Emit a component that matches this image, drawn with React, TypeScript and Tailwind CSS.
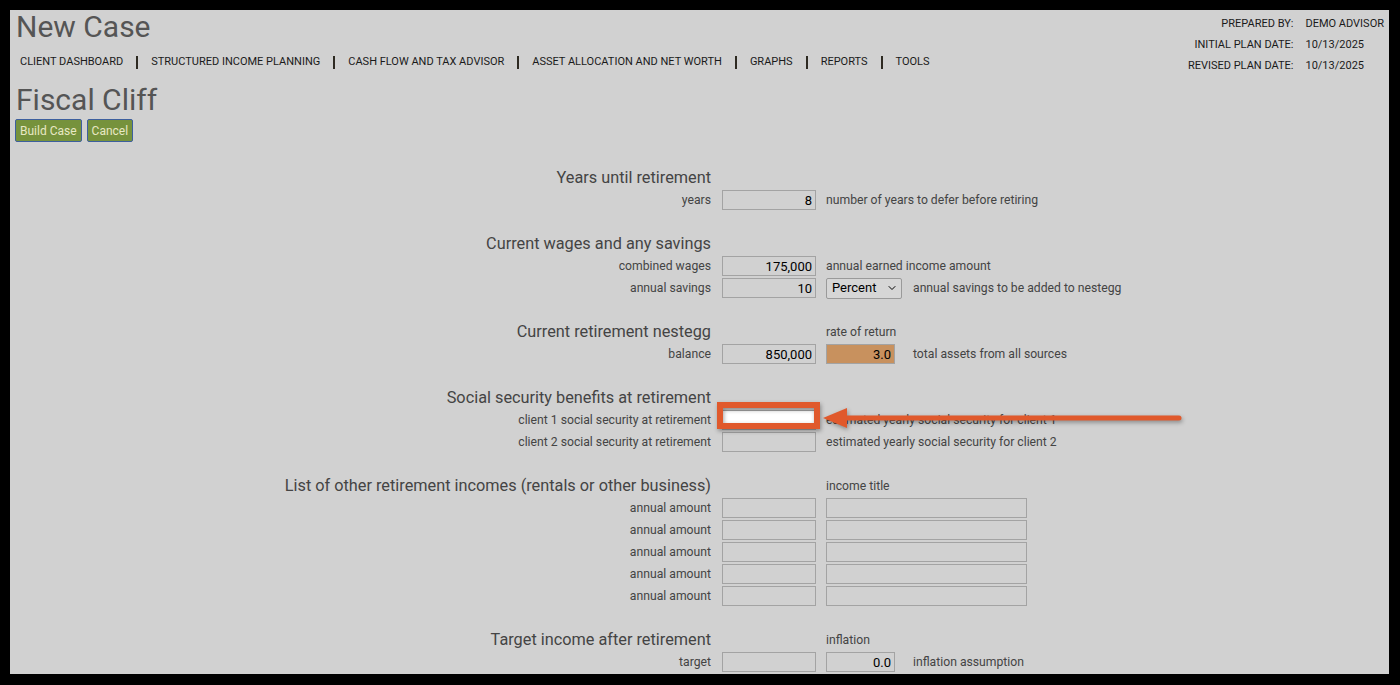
import React from "react";
import { ChevronDown } from "lucide-react";

const navItems = [
  "CLIENT DASHBOARD",
  "STRUCTURED INCOME PLANNING",
  "CASH FLOW AND TAX ADVISOR",
  "ASSET ALLOCATION AND NET WORTH",
  "GRAPHS",
  "REPORTS",
  "TOOLS",
];

function Field({
  value = "",
  w = "w-[94px]",
  bg = "bg-transparent",
}: {
  value?: string;
  w?: string;
  bg?: string;
}) {
  return (
    <input
      readOnly
      value={value}
      className={`${w} ${bg} h-[20px] border border-[#a3a3a3] text-right pr-[3px] text-[13px] text-black outline-none`}
    />
  );
}

function Row({
  label,
  heading,
  children,
}: {
  label: string;
  heading?: boolean;
  children?: React.ReactNode;
}) {
  return (
    <div className="flex items-center h-[22px]">
      <div
        className={`w-[695px] shrink-0 text-right ${
          heading ? "text-[16.3px] text-[#444]" : "text-[12.2px] text-[#444]"
        }`}
      >
        {label}
      </div>
      {children}
    </div>
  );
}

const Spacer = () => <div className="h-[22px]" />;

export default function App() {
  return (
    <div
      className="relative w-[1400px] h-[685px] bg-black pt-[10px] pl-[10px] pr-[11px] pb-[11px]"
      style={{ fontFamily: "Roboto, 'Liberation Sans', sans-serif" }}
    >
      <div className="bg-[#d1d1d1] h-full overflow-hidden pl-[6px] pr-[5px]">
        <div className="flex justify-between">
          <div>
            <h1 className="text-[30px] leading-[34px] text-[#555]">New Case</h1>
            <nav className="mt-[10px] ml-[4px] flex items-center gap-[13px] text-[11px] leading-[16px] text-[#1a1a1a]">
              {navItems.map((item, i) => (
                <React.Fragment key={item}>
                  {i > 0 && <span className="w-[2px] h-[13px] bg-[#2e2a22]" />}
                  <span>{item}</span>
                </React.Fragment>
              ))}
            </nav>
          </div>
          <div className="pt-[3px] grid grid-cols-[auto_auto] gap-x-[12px] text-[11px] leading-[21px] text-[#1a1a1a]">
            <span className="text-right">PREPARED BY:</span>
            <span>DEMO ADVISOR</span>
            <span className="text-right">INITIAL PLAN DATE:</span>
            <span>10/13/2025</span>
            <span className="text-right">REVISED PLAN DATE:</span>
            <span>10/13/2025</span>
          </div>
        </div>

        <h2 className="mt-[8px] text-[30px] leading-[32px] text-[#555]">Fiscal Cliff</h2>
        <div className="mt-[3px] -ml-px flex gap-[5px]">
          <button className="h-[23px] px-[4px] bg-[#76923c] border border-[#3d5f9e] rounded-[2px] text-[12px] text-[#e8e8c4]">
            Build Case
          </button>
          <button className="h-[23px] px-[4px] bg-[#76923c] border border-[#3d5f9e] rounded-[2px] text-[12px] text-[#e8e8c4]">
            Cancel
          </button>
        </div>

        <div className="mt-[25px] text-[12.2px] text-[#444]">
          <Row label="Years until retirement" heading />
          <Row label="years">
            <div className="ml-[11px]"><Field value="8" /></div>
            <span className="ml-[10px]">number of years to defer before retiring</span>
          </Row>
          <Spacer />
          <Row label="Current wages and any savings" heading />
          <Row label="combined wages">
            <div className="ml-[11px]"><Field value="175,000" /></div>
            <span className="ml-[10px]">annual earned income amount</span>
          </Row>
          <Row label="annual savings">
            <div className="ml-[11px]"><Field value="10" /></div>
            <div className="ml-[10px] w-[76px] h-[21px] border border-[#9a9a9a] rounded-[2px] bg-[#d6d6d6] flex items-center justify-between pl-[5px] pr-[3px] text-[13px] text-black">
              <span>Percent</span>
              <ChevronDown size={12} strokeWidth={2} />
            </div>
            <span className="ml-[11px]">annual savings to be added to nestegg</span>
          </Row>
          <Spacer />
          <Row label="Current retirement nestegg" heading>
            <span className="ml-[115px]">rate of return</span>
          </Row>
          <Row label="balance">
            <div className="ml-[11px]"><Field value="850,000" /></div>
            <div className="ml-[10px]"><Field value="3.0" w="w-[69px]" bg="bg-[#c8915e]" /></div>
            <span className="ml-[18px]">total assets from all sources</span>
          </Row>
          <Spacer />
          <Row label="Social security benefits at retirement" heading />
          <Row label="client 1 social security at retirement">
            <div className="ml-[11px]"><Field bg="bg-white" /></div>
            <span className="ml-[10px]">estimated yearly social security for client 1</span>
          </Row>
          <Row label="client 2 social security at retirement">
            <div className="ml-[11px]"><Field /></div>
            <span className="ml-[10px]">estimated yearly social security for client 2</span>
          </Row>
          <Spacer />
          <Row label="List of other retirement incomes (rentals or other business)" heading>
            <span className="ml-[115px]">income title</span>
          </Row>
          {[0, 1, 2, 3, 4].map((i) => (
            <Row key={i} label="annual amount">
              <div className="ml-[11px]"><Field /></div>
              <div className="ml-[10px]"><Field w="w-[201px]" /></div>
            </Row>
          ))}
          <Spacer />
          <Row label="Target income after retirement" heading>
            <span className="ml-[115px]">inflation</span>
          </Row>
          <Row label="target">
            <div className="ml-[11px]"><Field /></div>
            <div className="ml-[10px]"><Field value="0.0" w="w-[69px]" /></div>
            <span className="ml-[18px]">inflation assumption</span>
          </Row>
        </div>
      </div>

      {/* callout drawn over the form */}
      <svg
        className="absolute left-0 top-0 pointer-events-none"
        width="1400"
        height="685"
        style={{ filter: "drop-shadow(1px 2px 2px rgba(0,0,0,0.35))" }}
      >
        <rect x="720" y="405" width="97" height="21" fill="none" stroke="#e0592c" strokeWidth="6" />
        <line x1="842" y1="418" x2="1179" y2="418" stroke="#e0592c" strokeWidth="5" strokeLinecap="round" />
        <polygon points="823,418 847,408 847,428" fill="#e0592c" />
      </svg>
    </div>
  );
}
